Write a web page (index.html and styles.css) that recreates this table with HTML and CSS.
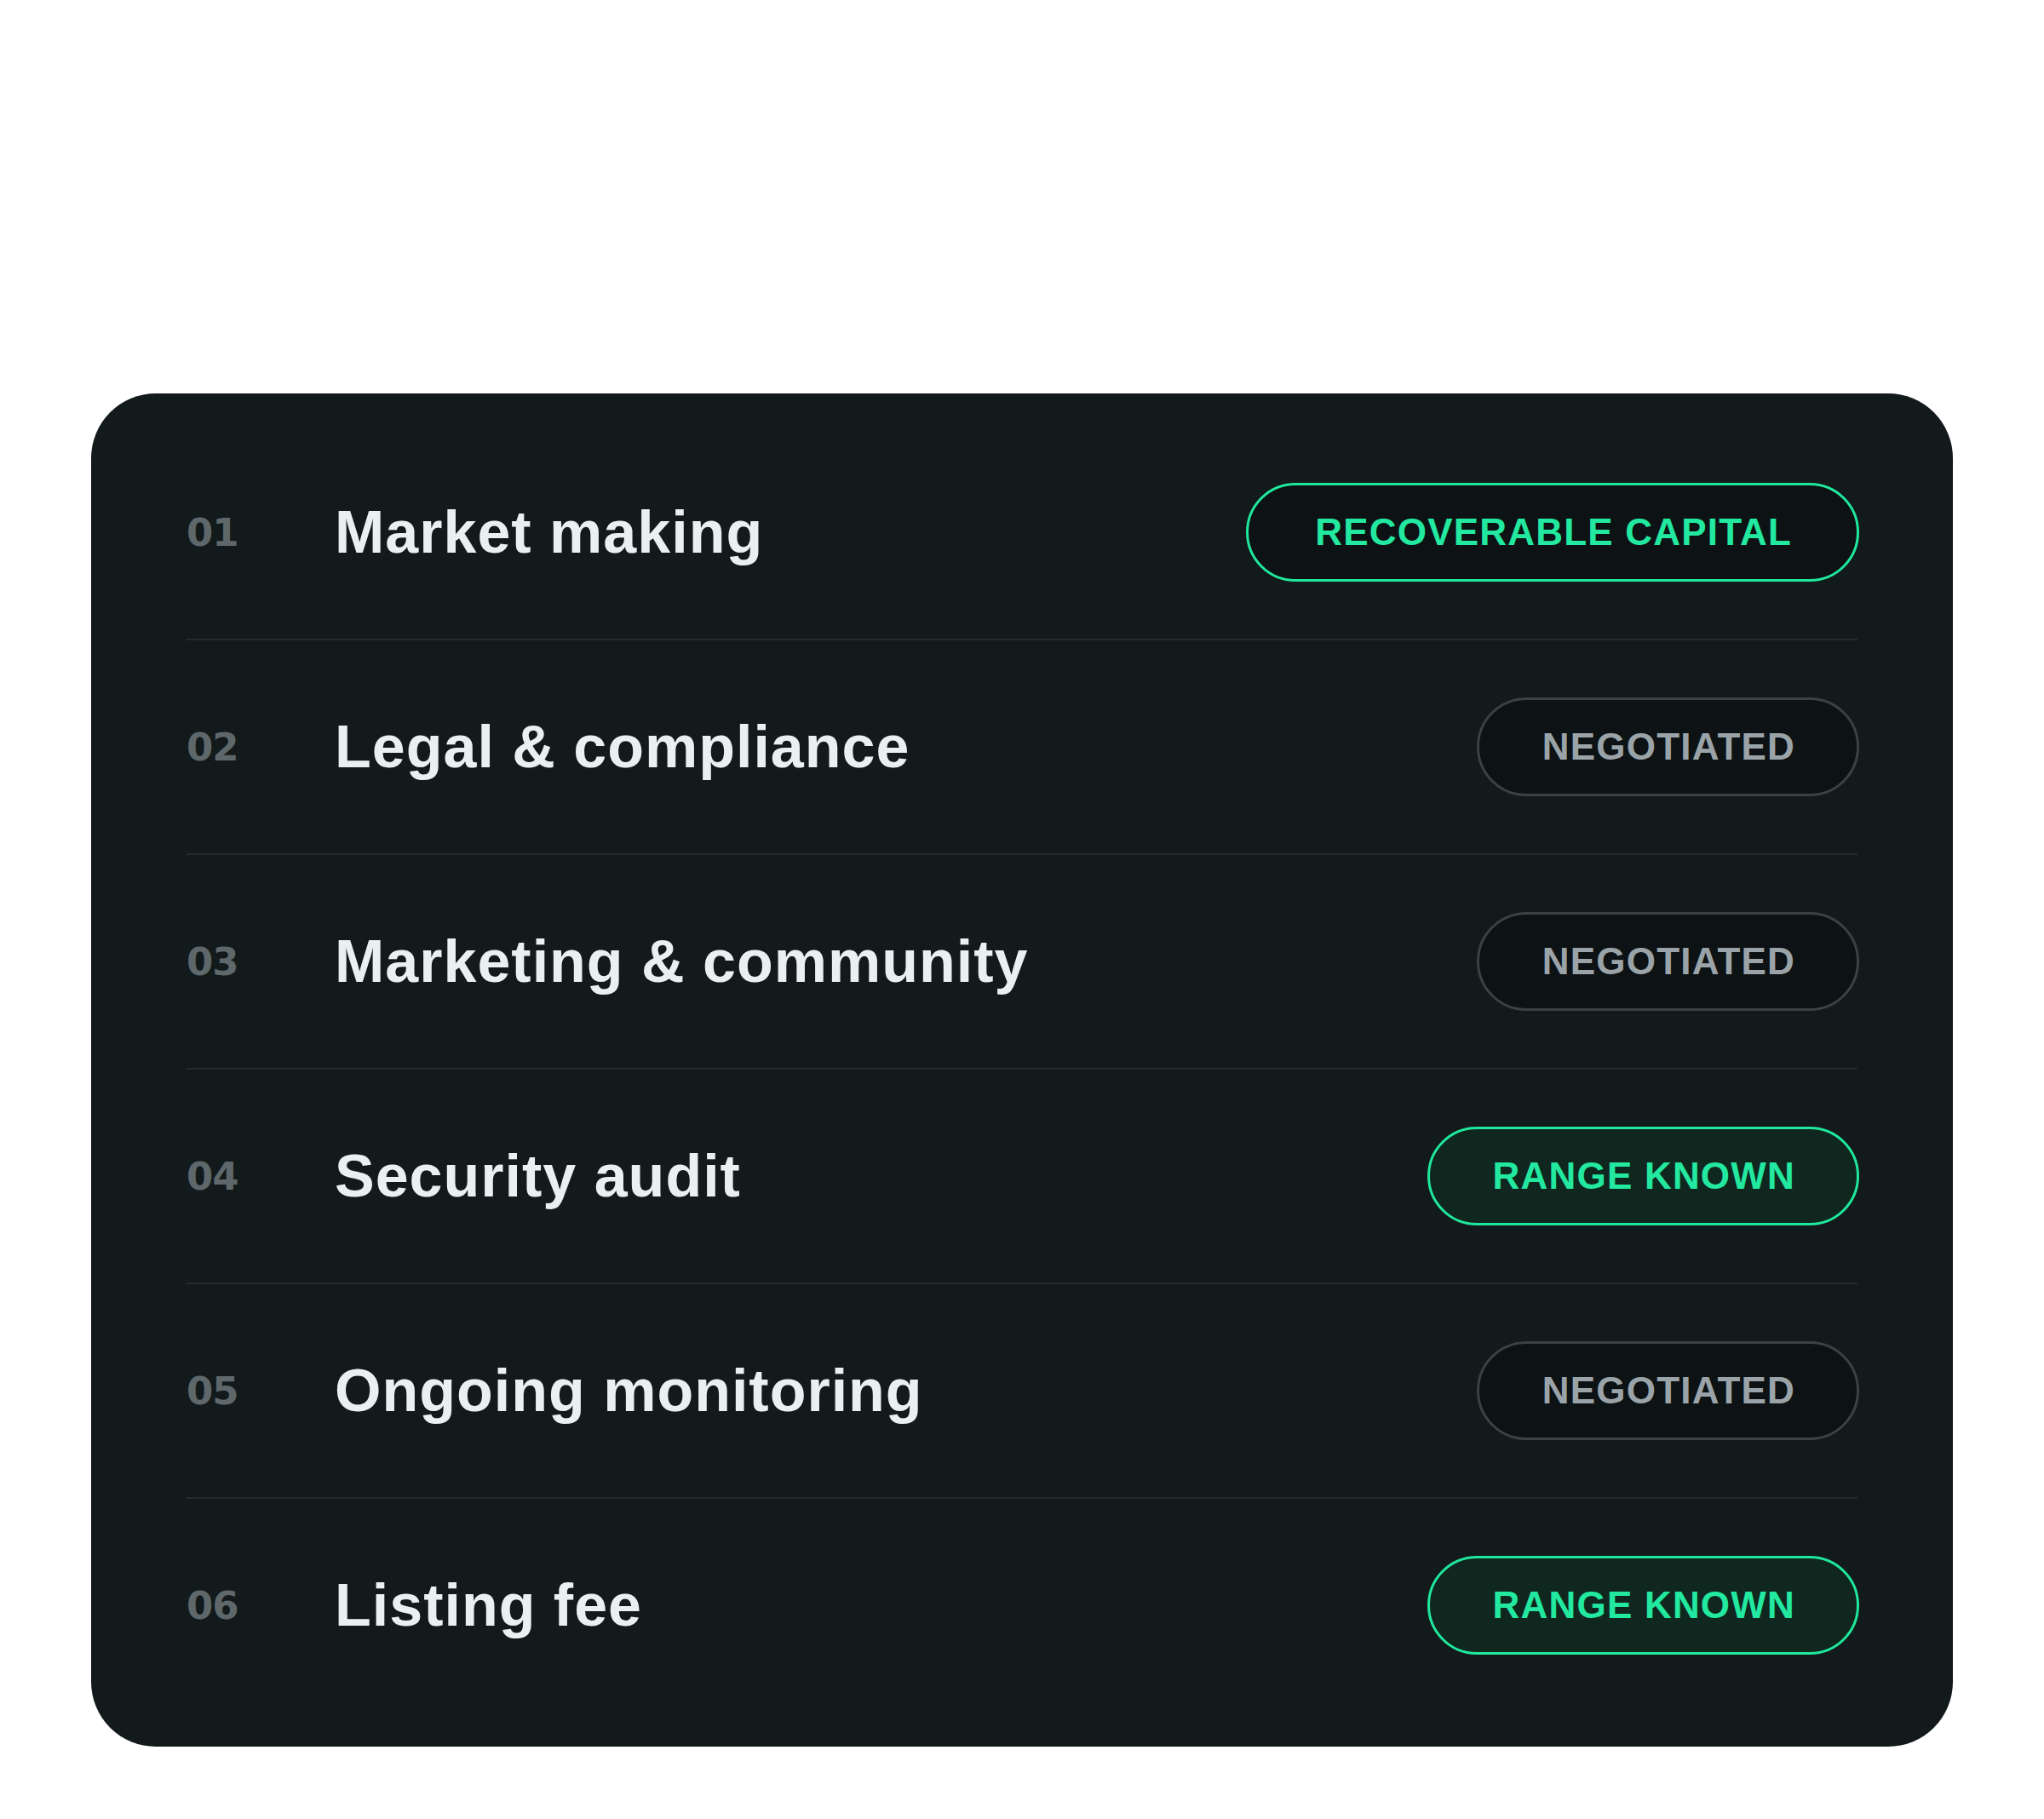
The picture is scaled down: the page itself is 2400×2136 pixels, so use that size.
FILE: index.html
```html
<!DOCTYPE html>
<html lang="en">
<head>
<meta charset="utf-8">
<title>Costs</title>
<link rel="stylesheet" href="styles.css">
</head>
<body>
<main class="page">
  <section class="card">
    <div class="row">
      <span class="num">01</span>
      <span class="title">Market making</span>
      <span class="badge badge-outline">RECOVERABLE CAPITAL</span>
    </div>
    <div class="row">
      <span class="num">02</span>
      <span class="title">Legal &amp; compliance</span>
      <span class="badge badge-muted">NEGOTIATED</span>
    </div>
    <div class="row">
      <span class="num">03</span>
      <span class="title">Marketing &amp; community</span>
      <span class="badge badge-muted">NEGOTIATED</span>
    </div>
    <div class="row">
      <span class="num">04</span>
      <span class="title">Security audit</span>
      <span class="badge badge-filled">RANGE KNOWN</span>
    </div>
    <div class="row">
      <span class="num">05</span>
      <span class="title">Ongoing monitoring</span>
      <span class="badge badge-muted">NEGOTIATED</span>
    </div>
    <div class="row">
      <span class="num">06</span>
      <span class="title">Listing fee</span>
      <span class="badge badge-filled">RANGE KNOWN</span>
    </div>
  </section>
</main>
</body>
</html>
```

FILE: styles.css
```css
html, body {
  margin: 0;
  padding: 0;
  background: #ffffff;
}

.page {
  padding: 462px 107px 85px 107px;
}

.card {
  background: #131a1c;
  border-radius: 76px;
  padding: 38px 112px 41px 112px;
  display: flex;
  flex-direction: column;
}

.row {
  display: flex;
  align-items: center;
  height: 250px;
}

.row + .row {
  border-top: 2px solid #232b2e;
}

.num {
  width: 174px;
  flex: none;
  font-family: "DejaVu Sans", "Liberation Sans", sans-serif;
  font-weight: 700;
  font-size: 45px;
  letter-spacing: -1px;
  color: #5e686b;
}

.title {
  flex: 1;
  font-family: "Liberation Sans", Arial, sans-serif;
  font-weight: 700;
  font-size: 70px;
  letter-spacing: 1px;
  color: #eaeff1;
}

.badge {
  flex: none;
  box-sizing: border-box;
  height: 116px;
  display: flex;
  align-items: center;
  padding: 0 72px 0 74px;
  border-radius: 58px;
  border: 3px solid;
  font-family: "Liberation Sans", Arial, sans-serif;
  font-weight: 700;
  font-size: 44px;
  letter-spacing: 1.2px;
  margin-right: -2px;
}

.badge-outline {
  border-color: #1fe89c;
  background: #0d1214;
  color: #22e8a0;
  padding: 0 76px 0 78px;
}

.badge-muted {
  border-color: #394245;
  background: #0d1214;
  color: #9aa4a8;
}

.badge-filled {
  border-color: #1fe89c;
  background: #10271f;
  color: #22e8a0;
}
```
